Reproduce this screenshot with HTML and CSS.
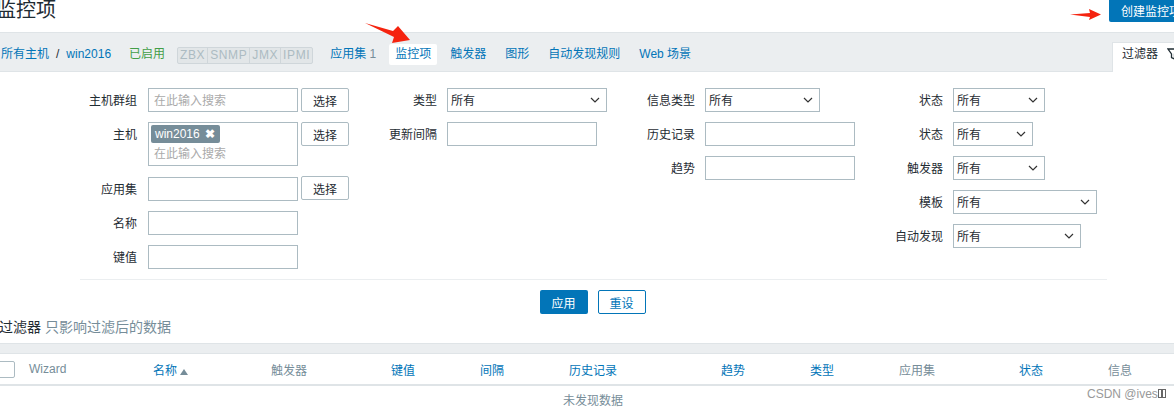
FILE: index.html
```html
<!DOCTYPE html>
<html lang="zh-CN">
<head>
  <meta charset="UTF-8" />
  <title>监控项</title>
  <link rel="stylesheet" href="styles.css">
</head>
<body>
  <div class="page">
    <div class="header">
      <h1>监控项</h1>
      <button class="btn create-btn">创建监控项</button>
    </div>

    <div class="nav">
      <a class="crumb" href="#">所有主机</a>
      <span class="crumb-sep">/</span>
      <a class="crumb" href="#">win2016</a>
      <span class="enabled">已启用</span>
      <div class="avail">
        <span>ZBX</span><span>SNMP</span><span>JMX</span><span>IPMI</span>
      </div>
      <a class="nav-link" href="#">应用集 <em>1</em></a>
      <a class="nav-link active" href="#">监控项</a>
      <a class="nav-link" href="#">触发器</a>
      <a class="nav-link" href="#">图形</a>
      <a class="nav-link" href="#">自动发现规则</a>
      <a class="nav-link" href="#">Web 场景</a>
      <div class="filter-tab">
        <span>过滤器</span>
        <svg class="funnel" width="12" height="12" viewBox="0 0 12 12"><path d="M1 1h10L7.5 6v5L4.5 9.5V6z" fill="none" stroke="#1f2c33" stroke-width="1.3"/></svg>
      </div>
    </div>

    <div class="filter">
      <div class="filter-cols">
        <div class="col col1">
          <div class="row">
            <label>主机群组</label>
            <input class="w150" type="text" placeholder="在此输入搜索">
            <button class="pick">选择</button>
          </div>
          <div class="row">
            <label>主机</label>
            <div class="multi w150">
              <span class="tag">win2016 <b>✖</b></span>
              <span class="hint">在此输入搜索</span>
            </div>
            <button class="pick">选择</button>
          </div>
          <div class="row raised">
            <label>应用集</label>
            <input class="w150" type="text">
            <button class="pick">选择</button>
          </div>
          <div class="row">
            <label>名称</label>
            <input class="w150" type="text">
          </div>
          <div class="row">
            <label>键值</label>
            <input class="w150" type="text">
          </div>
        </div>

        <div class="col col2">
          <div class="row">
            <label>类型</label>
            <select class="w160"><option>所有</option></select>
          </div>
          <div class="row">
            <label>更新间隔</label>
            <input class="w150" type="text">
          </div>
        </div>

        <div class="col col3">
          <div class="row">
            <label>信息类型</label>
            <select class="w115"><option>所有</option></select>
          </div>
          <div class="row">
            <label>历史记录</label>
            <input class="w150" type="text">
          </div>
          <div class="row">
            <label>趋势</label>
            <input class="w150" type="text">
          </div>
        </div>

        <div class="col col4">
          <div class="row">
            <label>状态</label>
            <select class="w92"><option>所有</option></select>
          </div>
          <div class="row">
            <label>状态</label>
            <select class="w80"><option>所有</option></select>
          </div>
          <div class="row">
            <label>触发器</label>
            <select class="w92"><option>所有</option></select>
          </div>
          <div class="row">
            <label>模板</label>
            <select class="w144"><option>所有</option></select>
          </div>
          <div class="row">
            <label>自动发现</label>
            <select class="w128"><option>所有</option></select>
          </div>
        </div>
      </div>

      <div class="filter-actions">
        <button class="btn">应用</button>
        <button class="btn-alt">重设</button>
      </div>
    </div>

    <div class="note"><span>过滤器</span> 只影响过滤后的数据</div>

    <div class="band"></div>
    <div class="thead">
      <span class="check"></span>
      <span>Wizard</span>
      <a href="#">名称<i class="sort"></i></a>
      <span>触发器</span>
      <a href="#">键值</a>
      <a href="#">间隔</a>
      <a href="#">历史记录</a>
      <a href="#">趋势</a>
      <a href="#">类型</a>
      <span>应用集</span>
      <a href="#">状态</a>
      <span>信息</span>
    </div>
    <div class="empty">未发现数据</div>

    <svg class="arrow arrow-tab" width="48" height="24" viewBox="0 0 48 24"><path d="M2 2L30 10L35 5L47 19L29 22L31 16z" fill="#f5230f"/></svg>
    <svg class="arrow arrow-btn" width="31" height="12" viewBox="0 0 31 12"><path d="M0 5.5L20 4L19 0L31 5.5L19 11L20 8z" fill="#f5230f"/></svg>
    <div class="mark">CSDN @ives<i></i><i></i></div>
  </div>
</body>
</html>
```

FILE: styles.css
```css
* {
  box-sizing: border-box;
  margin: 0;
  padding: 0;
}

body {
  font-family: 'Liberation Sans', 'Noto Sans CJK SC', sans-serif;
  font-size: 12px;
  color: #1f2c33;
  background: #fff;
  overflow: hidden;
}

a {
  color: #0275b8;
  text-decoration: none;
}

.page {
  position: relative;
  width: 1174px;
  height: 407px;
  overflow: hidden;
}

.header {
  height: 32px;
  display: flex;
  justify-content: space-between;
  align-items: flex-start;
}

.header h1 {
  font-size: 20px;
  font-weight: 400;
  line-height: 20px;
  margin-left: -4px;
}

.btn {
  height: 24px;
  width: 48px;
  background: #0275b8;
  color: #fff;
  border: none;
  border-radius: 2px;
  font: inherit;
}

.create-btn {
  width: 90px;
  margin-top: -2px;
  margin-right: -25px;
  padding-left: 12px;
  text-align: left;
}

.nav {
  height: 40px;
  background: #ebeef0;
  border-top: 1px solid #dfe4e7;
  border-bottom: 1px solid #dfe4e7;
  display: flex;
  align-items: center;
  padding: 5px 0 0 1px;
  line-height: 21px;
  position: relative;
}

.crumb-sep {
  margin: 0 7px;
  color: #1f2c33;
}

.enabled {
  color: #429e47;
  margin-left: 18px;
}

.avail {
  display: flex;
  margin: 1px 11px 0 12px;
  height: 17px;
  border: 1px solid #cfd6da;
  border-radius: 2px;
  background: #e2e6e8;
}

.avail span {
  padding: 0 2px;
  line-height: 15px;
  letter-spacing: 0.6px;
  color: #acbbc2;
  border-left: 1px solid #cfd6da;
}

.avail span:first-child {
  border-left: none;
}

.nav-link {
  padding: 0 6px;
  height: 21px;
  margin-right: 7px;
}

.nav-link em {
  font-style: normal;
  color: #768d99;
}

.nav-link.active {
  background: #fff;
  border-radius: 2px;
}

.filter-tab {
  position: absolute;
  right: -12px;
  top: 9px;
  bottom: -1px;
  width: 74px;
  background: #fff;
  border-top: 1px solid #dfe4e7;
  border-left: 1px solid #dfe4e7;
  display: flex;
  align-items: center;
  gap: 9px;
  padding: 0 0 6px 9px;
}

.funnel {
  flex-shrink: 0;
  margin-bottom: 2px;
}

.filter {
  height: 239px;
  padding-top: 16px;
}

.filter-cols {
  display: flex;
  height: 191px;
}

.col {
  display: flex;
  flex-direction: column;
  gap: 10px;
}

.row {
  display: flex;
  align-items: flex-start;
}

.row label {
  height: 24px;
  text-align: right;
  line-height: 26px;
  flex-shrink: 0;
}

.col1 { width: 349px; }
.col1 label { width: 137px; margin-right: 11px; }
.col2 { width: 258px; }
.col2 label { width: 88px; margin-right: 10px; }
.col3 { width: 248px; }
.col3 label { width: 88px; margin-right: 10px; }
.col4 label { width: 88px; margin-right: 10px; }

input, select {
  height: 24px;
  border: 1px solid #acbbc2;
  background-color: #fff;
  font: inherit;
  color: #1f2c33;
  padding: 1px 5px 0;
  border-radius: 0;
  outline: none;
}

input::placeholder, .hint {
  color: #aaa;
}

select {
  appearance: none;
  padding: 2px 0 0 3px;
  background-image: url("data:image/svg+xml,%3Csvg xmlns='http://www.w3.org/2000/svg' width='10' height='6'%3E%3Cpath d='M1 1l4 4 4-4' fill='none' stroke='%23333' stroke-width='1.2'/%3E%3C/svg%3E");
  background-repeat: no-repeat;
  background-position: right 6px center;
}

.w80 { width: 80px; }
.w92 { width: 92px; }
.w115 { width: 115px; }
.w128 { width: 128px; }
.w144 { width: 144px; }
.w150 { width: 150px; }
.w160 { width: 160px; }

.pick {
  width: 48px;
  height: 24px;
  margin-left: 3px;
  background: #fff;
  border: 1px solid #acbbc2;
  border-radius: 2px;
  font: inherit;
  color: #1f2c33;
}

.raised .pick {
  margin-top: -1px;
}

.multi {
  height: 44px;
  margin-bottom: 1px;
  border: 1px solid #acbbc2;
  padding: 2px;
}

.tag {
  display: block;
  width: 69px;
  height: 18px;
  line-height: 18px;
  background: #768d99;
  color: #fff;
  border-radius: 2px;
  padding-left: 4px;
  white-space: nowrap;
}

.tag b {
  font-size: 12px;
  margin-left: 2px;
}

.hint {
  display: block;
  line-height: 22px;
  padding-left: 3px;
}

.filter-actions {
  margin: 0 67px 0 80px;
  border-top: 1px solid #ebeef0;
  padding: 10px 2px 0 0;
  display: flex;
  justify-content: center;
  gap: 10px;
}

.btn-alt {
  height: 24px;
  width: 48px;
  background: #fff;
  border: 1px solid #0275b8;
  border-radius: 2px;
  color: #0275b8;
  font: inherit;
}

.note {
  height: 32px;
  padding-top: 8px;
  line-height: 17px;
  color: #768d99;
  font-size: 14px;
  margin-left: -1px;
}

.note span {
  color: #1f2c33;
}

.band {
  height: 11px;
  background: #ebeef0;
  border-top: 1px solid #dfe4e7;
  border-bottom: 1px solid #dfe4e7;
}

.thead {
  height: 32px;
  display: grid;
  grid-template-columns: 29px 124px 118px 120px 89px 89px 152px 89px 89px 120px 89px 1fr;
  align-items: center;
  color: #768d99;
  border-bottom: 2px solid #dfe4e7;
}

.check {
  width: 17px;
  height: 17px;
  margin-left: -2px;
  border: 1px solid #acbbc2;
  border-radius: 2px;
}

.sort {
  display: inline-block;
  margin-left: 3px;
  border-left: 4px solid transparent;
  border-right: 4px solid transparent;
  border-bottom: 6px solid #768d99;
}

.empty {
  text-align: center;
  color: #768d99;
  line-height: 20px;
  padding: 5px 0 0 12px;
}

.arrow {
  position: absolute;
}

.arrow-tab {
  left: 363px;
  top: 21px;
}

.arrow-btn {
  left: 1070px;
  top: 9px;
}

.mark {
  position: absolute;
  left: 1087px;
  top: 387px;
  color: #999;
  line-height: 14px;
  background: #fff;
}

.mark i {
  display: inline-block;
  width: 4px;
  height: 9px;
  border: 1px solid #666;
}
```
